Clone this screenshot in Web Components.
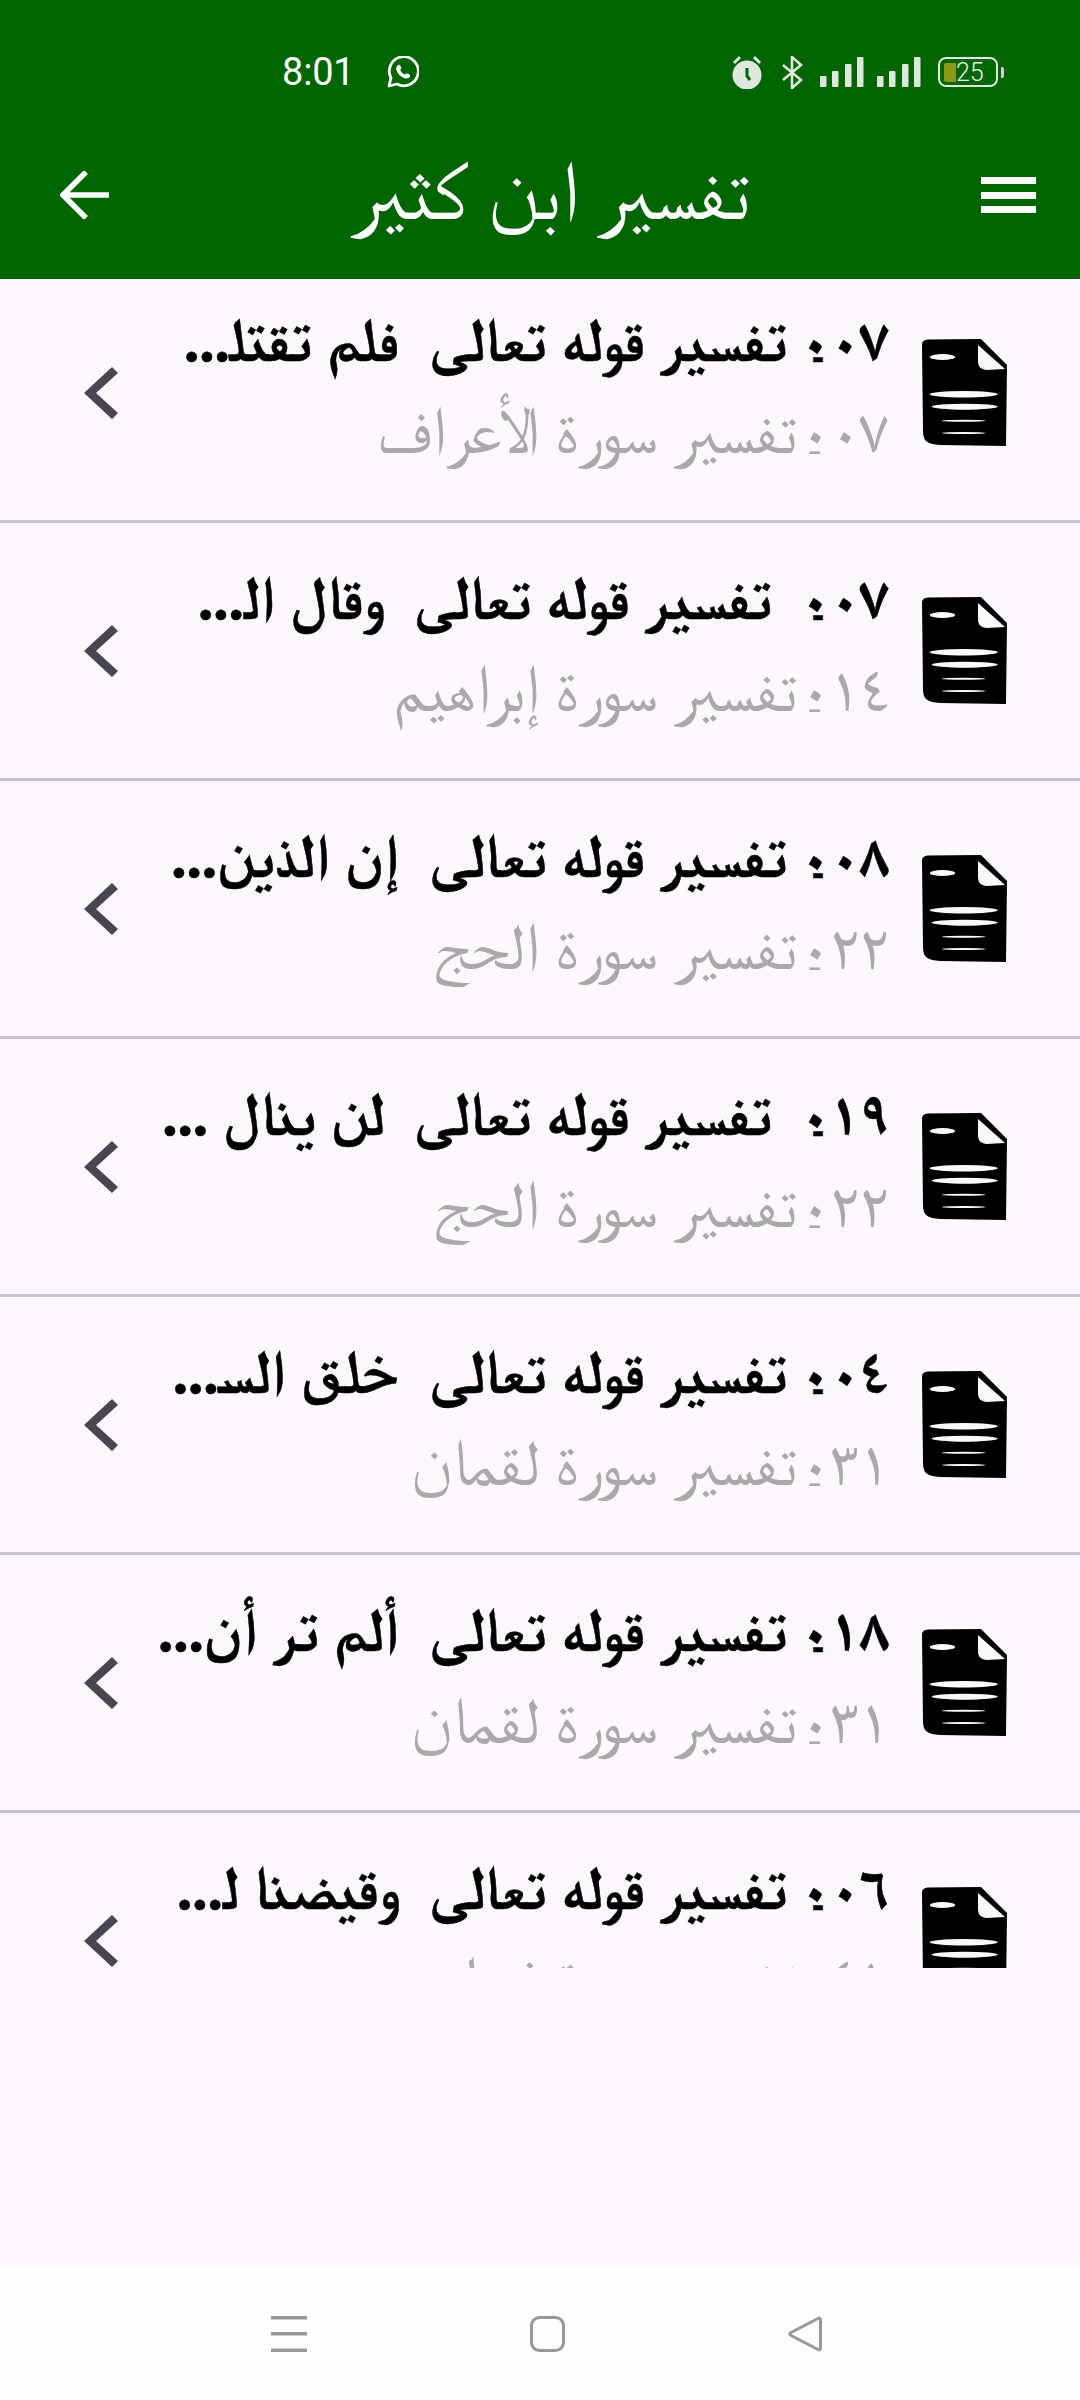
<!DOCTYPE html>
<html lang="ar">
<head>
<meta charset="utf-8">
<style>
html,body{margin:0;padding:0;background:#fdf7ff}
body{width:1080px;height:2400px;overflow:hidden;display:flex;flex-direction:column;font-family:"FreeSerif","Noto Naskh Arabic","DejaVu Sans",serif}
.d{font-size:.62em;line-height:0;vertical-align:-.22em;margin-right:var(--dr,-.65em);margin-left:var(--dl,.25em)}
.n{font-family:"Noto Naskh Arabic","FreeSerif",serif}
</style>
</head>
<body>
<status-bar></status-bar>
<app-bar>تفسير ابن كثير</app-bar>
<tafsir-list>
  <tafsir-row><span slot="title"><span class="n">٠٠٧</span><span class="d">-</span> تفسير قوله تعالى  فلم تقتل&#8205;...</span><span slot="sub"><span class="n">٠٠٧</span><span class="d">-</span> تفسير سورة الأعراف</span></tafsir-row>
  <tafsir-row><span slot="title"><span class="n">٠٠٧</span><span class="d">-</span>  تفسير قوله تعالى  وقال ال&#8205;...</span><span slot="sub"><span class="n">٠١٤</span><span class="d">-</span> تفسير سورة إبراهيم</span></tafsir-row>
  <tafsir-row><span slot="title"><span class="n">٠٠٨</span><span class="d">-</span> تفسير قوله تعالى  إن الذين...</span><span slot="sub"><span class="n">٠٢٢</span><span class="d">-</span> تفسير سورة الحج</span></tafsir-row>
  <tafsir-row><span slot="title"><span class="n">٠١٩</span><span class="d">-</span>  تفسير قوله تعالى  لن ينال ...</span><span slot="sub"><span class="n">٠٢٢</span><span class="d">-</span> تفسير سورة الحج</span></tafsir-row>
  <tafsir-row><span slot="title"><span class="n">٠٠٤</span><span class="d">-</span> تفسير قوله تعالى  خلق الس&#8205;...</span><span slot="sub"><span class="n">٠٣١</span><span class="d">-</span> تفسير سورة لقمان</span></tafsir-row>
  <tafsir-row><span slot="title"><span class="n">٠١٨</span><span class="d">-</span> تفسير قوله تعالى  ألم تر أن...</span><span slot="sub"><span class="n">٠٣١</span><span class="d">-</span> تفسير سورة لقمان</span></tafsir-row>
  <tafsir-row><span slot="title"><span class="n">٠٠٦</span><span class="d">-</span> تفسير قوله تعالى  وقيضنا ل&#8205;...</span><span slot="sub"><span class="n">٠٤١</span><span class="d">-</span> تفسير سورة فصلت</span></tafsir-row>
</tafsir-list>
<nav-bar></nav-bar>
<script>
function def(name, html){
  customElements.define(name, class extends HTMLElement{
    constructor(){super();this.attachShadow({mode:'open'}).innerHTML=html;}
  });
}
def('status-bar',`<style>
:host{display:flex;justify-content:space-between;align-items:flex-start;height:111px;box-sizing:border-box;padding:55px 76px 0 282px;background:#006400;color:#fff}
.g{display:flex;align-items:center;height:34px}
.t{font:400 38px/34px Roboto,sans-serif;letter-spacing:-.2px;margin-right:32px}
svg{display:block}
.bat{display:flex;align-items:center;width:60px;height:30px;box-sizing:border-box;border:2.5px solid #dfeadf;border-radius:8px;padding-left:4px;margin-left:17px}
.fill{width:12px;height:19px;background:#8b9a12;border-radius:2px 0 0 2px}
.n{font:300 25px/25px Roboto,sans-serif;color:#e6efe6;margin-left:0}
.nub{width:3px;height:11px;background:#c9d8c9;margin-left:3px;border-radius:0 2px 2px 0}
</style>
<div class="g"><span class="t">8:01</span>
<svg width="33" height="33" viewBox="0 0 33 33" fill="none"><path d="M3 30l2-8A14.5 14.5 0 1 1 11 28z" stroke="#fff" stroke-width="2.8" stroke-linejoin="round"/><path d="M11.500 9.500c1-1 2.300-1 2.800 0l1 2.300c.3.800-.8 1.700-1.100 2.300 1 2 2.700 3.700 4.700 4.600.6-.4 1.400-1.600 2.200-1.300l2.400 1.200c.9.500.8 1.800 0 2.700-1.200 1.300-3 1.600-5 .9-4.200-1.500-7.200-4.600-8.200-8.500-.3-1.600.1-3 1.200-4.200z" fill="#fff"/></svg></div>
<div class="g">
<svg width="34" height="34" viewBox="0 0 34 34"><circle cx="17" cy="20" r="14.500" fill="#dfe8df"/><path d="M4 8l6-6M30 8l-6-6" stroke="#dfe8df" stroke-width="3"/><path d="M17 13v8l3 4" stroke="#006400" stroke-width="3" fill="none"/></svg>
<svg style="margin-left:17px" width="22" height="33" viewBox="0 0 22 33" fill="none"><path d="M2 9l18 15-9 8V1l9 8L2 24" stroke="#dfe8df" stroke-width="2.600"/></svg>
<svg style="margin-left:17px" width="44" height="30" viewBox="0 0 44 30"><g fill="#dce8dc"><rect x="0" y="19" width="6.500" height="11" rx="1"/><rect x="12" y="14" width="6.500" height="16" rx="1"/><rect x="25" y="7" width="6.500" height="23" rx="1"/><rect x="37" y="0" width="6.500" height="30" rx="1"/></g></svg>
<svg style="margin-left:13px" width="44" height="30" viewBox="0 0 44 30"><g fill="#dce8dc"><rect x="0" y="19" width="6.500" height="11" rx="1"/><rect x="12" y="14" width="6.500" height="16" rx="1"/><rect x="25" y="7" width="6.500" height="23" rx="1"/><rect x="37" y="0" width="6.500" height="30" rx="1"/></g></svg>
<div class="bat"><div class="fill"></div><span class="n">25</span></div><div class="nub"></div>
</div>`);
def('app-bar',`<style>
:host{display:flex;align-items:center;justify-content:space-between;height:168px;box-sizing:border-box;padding:0 44px 0 60px;background:#006400;color:#fff}
.t{font:400 82px/90px "FreeSerif","Noto Naskh Arabic","DejaVu Sans",serif;direction:rtl;white-space:pre;padding-left:10px;margin-bottom:3px}
svg{display:block}
.b{display:flex;flex-direction:column;gap:7.5px;width:55px}
.b i{display:block;height:7px;background:#fff}
</style>
<svg width="49" height="48" viewBox="0 0 49 48" fill="none"><path d="M49 24H3M26 1L3 24l23 23" stroke="#fff" stroke-width="5.500"/></svg>
<span class="t"><slot></slot></span>
<div class="b"><i></i><i></i><i></i></div>`);
def('doc-icon',`<style>:host{display:block;width:85px;height:107px;flex:none}svg{display:block}</style>
<svg width="85" height="107" viewBox="0 0 85 107"><path d="M6 .5 59 0l26 26-1 81-66-1c-12-1-17-3-17-14L0 6C0 2 2 1 6 .5z" fill="#000"/>
<g fill="#fdf7ff"><path d="M56 6 83 30l-19 1c-5-1-8-3-8-9z"/><ellipse cx="20.500" cy="18" rx="12.700" ry="3"/><ellipse cx="41.700" cy="55.300" rx="34" ry="3.200"/><ellipse cx="42.700" cy="67.700" rx="33" ry="3"/><ellipse cx="41.700" cy="81.700" rx="21.700" ry="1"/><ellipse cx="41.700" cy="94" rx="21.700" ry="1"/></g></svg>`);
def('chevron-icon',`<style>:host{display:block;width:34px;height:52px;flex:none}svg{display:block}</style>
<svg width="34" height="52" viewBox="0 0 34 52"><path d="M28 0l6 6-22 20 22 20-6 6L0 26z" fill="#49454f"/></svg>`);
def('tafsir-row',`<style>
:host{display:flex;flex:none;direction:rtl;align-items:center;height:258px;box-sizing:border-box;border-bottom:3px solid #cac4d0;padding:0 73px 0 84px}
.c{display:flex;flex-direction:column;flex:1;min-width:0;margin:0 33px 0 34px}
.a{font-size:61px;line-height:72px;font-weight:700;color:#000;white-space:pre;margin-top:-5px;-webkit-text-stroke:.5px #000}
.s{font-size:66px;line-height:70px;font-weight:400;color:#aaa7ad;white-space:pre;margin-top:14px;--dr:-.52em;--dl:-.13em}
</style>
<doc-icon></doc-icon>
<div class="c"><div class="a"><slot name="title"></slot></div><div class="s"><slot name="sub"></slot></div></div>
<chevron-icon></chevron-icon>`);
def('tafsir-list',`<style>
:host{display:block;height:1689px;overflow:hidden;background:#fdf7ff}
.in{display:flex;flex-direction:column;margin-top:-14px}
</style><div class="in"><slot></slot></div>`);
def('nav-bar',`<style>
:host{display:flex;justify-content:space-between;align-items:flex-start;height:133px;margin-top:299px;box-sizing:border-box;padding:49px 258px 0 271px;background:#fefefe}
svg{display:block}
</style>
<svg width="36" height="36" viewBox="0 0 36 36"><g fill="#9a969c"><rect y="0" width="36" height="3.500"/><rect y="16" width="36" height="3.500"/><rect y="32.500" width="36" height="3.500"/></g></svg>
<svg width="35" height="36" viewBox="0 0 35 36" fill="none"><rect x="1.500" y="1.500" width="32" height="33" rx="8" stroke="#9a969c" stroke-width="3"/></svg>
<svg width="34" height="36" viewBox="0 0 34 36" fill="none"><path d="M30 2.500c1.500-1 2.500-.3 2.500 1.500v28c0 1.800-1 2.500-2.500 1.500L3 19.500c-1.500-1-1.500-2 0-3z" stroke="#9a969c" stroke-width="3" stroke-linejoin="round"/></svg>`);
</script>
</body>
</html>
